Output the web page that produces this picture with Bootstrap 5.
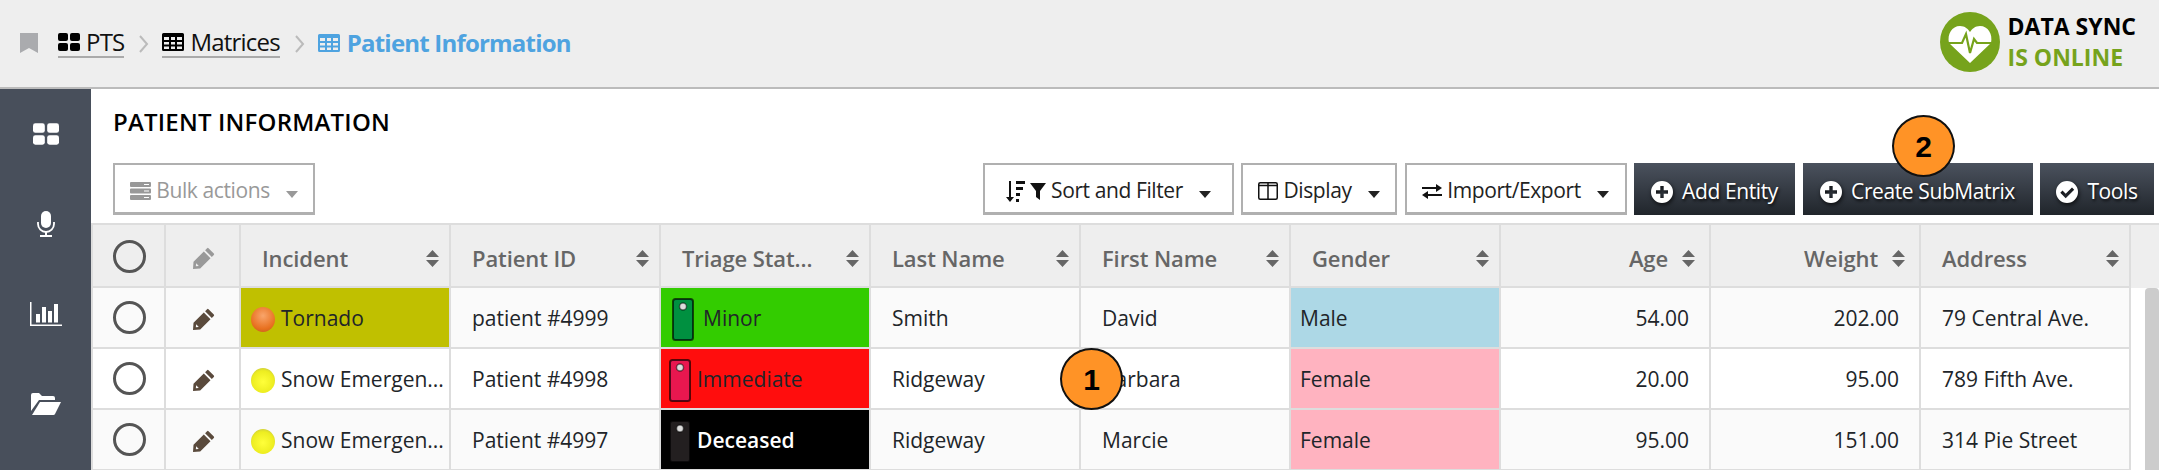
<!DOCTYPE html>
<html lang="en">
<head>
    <meta charset="UTF-8">
    <title>Patient Information</title>
    <link href="https://cdn.jsdelivr.net/npm/bootstrap@5.3.0/dist/css/bootstrap.min.css" rel="stylesheet">
    <style>
        html, body { height: 470px; overflow: hidden; }
        body { font-family: "Open Sans", "Liberation Sans", sans-serif; color: #000; background: #fff; }
        .top-bar { height: 89px; background: #eee; border-bottom: 2px solid #bbb; padding: 0 23px 0 20px; }
        .crumb { font-size: 24px; color: #111; letter-spacing: -0.8px; }
        .crumb-link { border-bottom: 2px solid #aaa; height: 42px; padding-top: 12px; gap: 6px; margin-top: 16px; }
        .crumb-sep { margin: 33px 13px 0 15px; }
        .crumb-active { color: #4ea3e0; font-weight: 700; gap: 7px; margin-top: 16px; height: 42px; padding-top: 12px; letter-spacing: -0.8px; }
        .crumb-mark { margin-top: 33px; }
        .sync-text { font-size: 23px; font-weight: 700; line-height: 31px; margin-left: 8px; }
        .sync-green { color: #76a31c; }
        .side-rail { width: 91px; height: 381px; background: #484f5b; }
        .side-item { height: 90px; }
        .main-area { width: 2068px; }
        .page-title { font-size: 24px; font-weight: 600; letter-spacing: .2px; margin: 0; padding: 19px 0 0 22px; height: 74px; line-height: 27px; }
        .tool-row { height: 60px; padding: 0 5px 0 22px; gap: 7.5px; }
        .tool-btn { height: 52px; border-radius: 0; font-size: 21px; letter-spacing: -0.4px; padding: 5px 0 0; display: flex; align-items: center; justify-content: center; gap: 5px; }
        .tool-light { background: #fff; border: 2px solid #b0b0b0; border-bottom-width: 3px; color: #222; }
        .tool-dim { color: #999; width: 202px; margin-right: auto; }
        .tool-dark { background: linear-gradient(#4b525e, #20252b); border: 0; color: #fff; text-shadow: 1px 2px 3px rgba(0,0,0,.8); gap: 9px; }
        .tool-dark svg { filter: drop-shadow(1px 2px 2px rgba(0,0,0,.7)); }
        .caret-down { width: 0; height: 0; border: 6px solid transparent; border-top: 7px solid currentColor; border-bottom: 0; margin: 7px 0 0 11px; }
        .w-sort { width: 251px; } .w-display { width: 156px; } .w-import { width: 222px; }
        .w-add { width: 161px; } .w-sub { width: 230px; } .w-tools { width: 114px; }
        .grid-wrap { height: 247px; overflow: hidden; border-top: 2px solid #ddd; }
        .grid-table { width: 2040px; table-layout: fixed; margin: 0; border-collapse: separate; border-spacing: 0; }
        .grid-table th, .grid-table td { padding: 0 9px; border: 0; border-right: 2px solid #ddd; border-bottom: 2px solid #ddd; font-size: 21px; letter-spacing: 0; vertical-align: middle; box-shadow: none; }
        .grid-table th:first-child, .grid-table td:first-child { border-left: 2px solid #ddd; }
        .grid-table thead th { height: 63px; background: #eee; color: #666; font-weight: 600; font-size: 22px; letter-spacing: -0.1px; padding: 5px 10px 0 21px; }
        .grid-table td { height: 61px; padding-top: 3px; white-space: nowrap; overflow: hidden; text-overflow: ellipsis; }
        .grid-table td.cell-pad { padding-left: 21px; }
        .grid-table td.cell-num { text-align: right; padding-right: 20px; }
        .grid-table tr.row-odd td { background: #fafafa; }
        .grid-table tr.row-even td { background: #fff; }
        .grid-table .cell-icon, .grid-table thead .cell-icon { padding: 0 0 0 2px; text-align: center; }
        .grid-table tr td.bg-yellow { background: #c0c000; }
        .grid-table tr td.bg-minor { background: #33cc00; }
        .grid-table tr td.bg-immediate { background: #ff0d0d; }
        .grid-table tr td.bg-deceased { background: #000; color: #fff; font-weight: 600; }
        .grid-table tr td.bg-male { background: #add8e6; }
        .grid-table tr td.bg-female { background: #ffb3c0; }
        .grid-table th.th-right > div { justify-content: flex-end; gap: 14px; padding-right: 4px; }
        .pick-ring { display: inline-block; width: 33px; height: 33px; border: 3px solid #555; border-radius: 50%; vertical-align: middle; }
        .status-light { flex: 0 0 24px; height: 25px; border-radius: 50%; margin: 0 6px 0 1px; }
        .light-orange { background: radial-gradient(circle at 50% 35%, #f9a56b, #e8701f 65%, #b85a1e); }
        .light-yellow { background: radial-gradient(circle at 50% 55%, #ffff3a, #eded20 60%, #a8a860); }
        .triage-wrap { gap: 6px; margin-left: -1px; }
        .triage-minor { margin-left: 2px; gap: 9px; }
        .scroll-side { width: 28px; background: #fff; }
        .scroll-head { height: 63px; background: #eee; }
        .scroll-thumb { width: 14px; height: 190px; margin-left: 14px; background: #ccc; border-radius: 4px 4px 0 0; }
        .step-badge { position: absolute; width: 63px; height: 62px; border-radius: 50%; background: #ff9326; border: 2px solid #111; font-family: "Liberation Sans", sans-serif; font-weight: 700; font-size: 30px; display: flex; align-items: center; justify-content: center; }
        .step-one { left: 1060px; top: 348px; }
        .step-two { left: 1892px; top: 115px; }
    </style>
</head>
<body class="position-relative">

    <svg width="0" height="0" class="position-absolute">
        <defs>
            <symbol id="ic-tiles" viewBox="0 0 22 18"><rect width="10" height="8" rx="2"/><rect x="12" width="10" height="8" rx="2"/><rect y="10" width="10" height="8" rx="2"/><rect x="12" y="10" width="10" height="8" rx="2"/></symbol>
            <symbol id="ic-table" viewBox="0 0 22 18"><path fill-rule="evenodd" d="M1.5 0h19A1.5 1.5 0 0 1 22 1.5v15a1.5 1.5 0 0 1-1.500 1.500h-19A1.5 1.500 0 0 1 0 16.500v-15A1.500 1.500 0 0 1 1.500 0zM2 4v3h5V4zm7 0v3h4V4zm6 0v3h5V4zM2 9v2.500h5V9zm7 0v2.500h4V9zm6 0v2.500h5V9zM2 13.500V16h5v-2.500zm7 0V16h4v-2.500zm6 0V16h5v-2.500z"/></symbol>
            <symbol id="ic-pencil" viewBox="0 0 22 22"><path d="M15.500 1.200 20.800 6.500a1 1 0 0 1 0 1.400l-2 2-6.700-6.700 2-2a1 1 0 0 1 1.400 0zM10.800 4.500l6.700 6.700L7.200 21.500 0 22l.5-7.200zM3.200 16.200l-.4 3.100 3-.4z"/></symbol>
            <symbol id="ic-sort" viewBox="0 0 13 17"><path d="M6.500 0 13 7H0zM0 10h13l-6.500 7z"/></symbol>
            <symbol id="ic-plus" viewBox="0 0 22 22"><path fill-rule="evenodd" d="M11 0a11 11 0 1 1 0 22 11 11 0 0 1 0-22zM9.300 5v4.300H5v3.400h4.300V17h3.400v-4.300H17V9.300h-4.300V5z"/></symbol>
            <symbol id="ic-check" viewBox="0 0 22 22"><path fill-rule="evenodd" d="M11 0a11 11 0 1 1 0 22 11 11 0 0 1 0-22zM16 6.500l-6.300 6.300-3.200-3.200-2.200 2.200 5.400 5.400 8.500-8.500z"/></symbol>
            <symbol id="ic-phone" viewBox="0 0 22 43"><rect x="1" y="1" width="20" height="41" rx="2.500" fill="currentColor" stroke="#000" stroke-opacity=".65" stroke-width="2"/><circle cx="11" cy="8.500" r="3.500" fill="#ddd" stroke="#000" stroke-opacity=".5" stroke-width="1.500"/></symbol>
        </defs>
    </svg>

    <header class="top-bar d-flex justify-content-between">
        <div class="crumb d-flex align-items-start">
            <svg width="18" height="20" viewBox="0 0 18 20" fill="#aaabae" class="crumb-mark me-3"><path d="M0 0h18v20l-9-5-9 5z"/></svg>
            <div class="crumb-link d-flex align-items-center ms-1">
                <svg width="22" height="18"><use href="#ic-tiles"/></svg>PTS
            </div>
            <svg class="crumb-sep" width="10" height="22" viewBox="0 0 10 22"><path d="M1 3l7 8-7 8" fill="none" stroke="#bbb" stroke-width="2"/></svg>
            <div class="crumb-link d-flex align-items-center">
                <svg width="22" height="18"><use href="#ic-table"/></svg>Matrices
            </div>
            <svg class="crumb-sep" width="10" height="22" viewBox="0 0 10 22"><path d="M1 3l7 8-7 8" fill="none" stroke="#bbb" stroke-width="2"/></svg>
            <div class="crumb-active d-flex align-items-center">
                <svg width="22" height="18" fill="#4ea3e0"><use href="#ic-table"/></svg>Patient Information
            </div>
        </div>
        <div class="d-flex align-items-center">
            <svg width="60" height="60" viewBox="0 0 60 60" class="mb-1">
                <circle cx="30" cy="30" r="30" fill="#76a31c"/>
                <path d="M30 51 9 31C7 22 12 14 20 14c5 0 8 3 10 6 2-3 5-6 10-6 8 0 13 8 11 17z" fill="#fff"/>
                <path d="M8 31h14l4-9 4 19 4-14 3 4h15" fill="none" stroke="#76a31c" stroke-width="2.200"/>
            </svg>
            <div class="sync-text mb-1">DATA SYNC<br><span class="sync-green">IS ONLINE</span></div>
        </div>
    </header>

    <div class="d-flex">
        <nav class="side-rail d-flex flex-column align-items-center flex-shrink-0 text-white">
            <div class="side-item d-flex align-items-center justify-content-center">
                <svg width="26" height="22" fill="#fff"><use href="#ic-tiles"/></svg>
            </div>
            <div class="side-item d-flex align-items-center justify-content-center">
                <svg width="18" height="26" viewBox="0 0 18 26" fill="#fff"><rect x="4" y="0" width="10" height="17" rx="5"/><path d="M1 11v2a8 8 0 0 0 16 0v-2" fill="none" stroke="#fff" stroke-width="1.800"/><path d="M8 20h2v4h5v2H3v-2h5z"/></svg>
            </div>
            <div class="side-item d-flex align-items-center justify-content-center">
                <svg width="32" height="24" viewBox="0 0 32 24" fill="#fff"><path d="M0 0h1.500v22.500H32V24H0z"/><rect x="6" y="12" width="4" height="8.500"/><rect x="12" y="5" width="4" height="15.500"/><rect x="18" y="9" width="4" height="11.500"/><rect x="24" y="2" width="4" height="18.500"/></svg>
            </div>
            <div class="side-item d-flex align-items-center justify-content-center">
                <svg width="30" height="22" viewBox="0 0 30 22" fill="#fff"><path d="M0 2a2 2 0 0 1 2-2h6l3 3h11a2 2 0 0 1 2 2v2H8L0 18z"/><path d="M9 9h21l-6 12a2 2 0 0 1-1.500 1H1z"/></svg>
            </div>
        </nav>

        <main class="main-area">
            <h1 class="page-title">PATIENT INFORMATION</h1>
            <div class="tool-row d-flex">
                <button class="btn tool-btn tool-light tool-dim">
                    <svg width="21" height="18" viewBox="0 0 21 18" fill="#999"><path fill-rule="evenodd" d="M1 0h19a1 1 0 0 1 1 1v3a1 1 0 0 1-1 1H1a1 1 0 0 1-1-1V1a1 1 0 0 1 1-1zm13 2v1h5V2zM1 6.500h19a1 1 0 0 1 1 1v3a1 1 0 0 1-1 1H1a1 1 0 0 1-1-1v-3a1 1 0 0 1 1-1zm13 2v1h5v-1zM1 13h19a1 1 0 0 1 1 1v3a1 1 0 0 1-1 1H1a1 1 0 0 1-1-1v-3a1 1 0 0 1 1-1zm13 2v1h5v-1z"/></svg>
                    Bulk actions<span class="caret-down"></span>
                </button>
                <button class="btn tool-btn tool-light w-sort">
                    <svg width="41" height="21" viewBox="0 0 41 21" fill="#111"><path d="M4 0h2v16h3l-4 5-4-5h3zM11 0h9v3h-9zM11 6h7v3h-7zM11 12h4v3h-4zM11 18h3v3h-3zM25 2h16l-6 8v9l-4-3v-6z"/></svg>
                    Sort and Filter<span class="caret-down"></span>
                </button>
                <button class="btn tool-btn tool-light w-display">
                    <svg width="20" height="18" viewBox="0 0 20 18" fill="none" stroke="#111" stroke-width="1.500"><rect x=".75" y=".75" width="18.500" height="16.500" rx="1.500"/><path d="M10 1v16M1 3.500h18"/></svg>
                    Display<span class="caret-down"></span>
                </button>
                <button class="btn tool-btn tool-light w-import">
                    <svg width="20" height="15" viewBox="0 0 20 15" fill="#111"><path d="M0 3h14V0l6 4-6 4V5H0zM20 10H6V7l-6 4 6 4v-3h14z"/></svg>
                    Import/Export<span class="caret-down"></span>
                </button>
                <button class="btn tool-btn tool-dark w-add"><svg width="22" height="26" fill="#fff"><use href="#ic-plus"/></svg>Add Entity</button>
                <button class="btn tool-btn tool-dark w-sub"><svg width="22" height="26" fill="#fff"><use href="#ic-plus"/></svg>Create SubMatrix</button>
                <button class="btn tool-btn tool-dark w-tools"><svg width="22" height="26" fill="#fff"><use href="#ic-check"/></svg>Tools</button>
            </div>

            <div class="grid-wrap d-flex">
                <table class="table grid-table flex-shrink-0">
                    <colgroup>
                        <col style="width:75px"><col style="width:75px">
                        <col style="width:210px"><col style="width:210px"><col style="width:210px"><col style="width:210px"><col style="width:210px"><col style="width:210px"><col style="width:210px"><col style="width:210px"><col style="width:210px">
                    </colgroup>
                    <thead>
                        <tr>
                            <th class="cell-icon"><span class="pick-ring"></span></th>
                            <th class="cell-icon"><svg width="22" height="22" fill="#999"><use href="#ic-pencil"/></svg></th>
                            <th><div class="d-flex justify-content-between align-items-center">Incident<svg width="13" height="17" fill="#666"><use href="#ic-sort"/></svg></div></th>
                            <th><div class="d-flex justify-content-between align-items-center">Patient ID<svg width="13" height="17" fill="#666"><use href="#ic-sort"/></svg></div></th>
                            <th><div class="d-flex justify-content-between align-items-center">Triage Stat...<svg width="13" height="17" fill="#666"><use href="#ic-sort"/></svg></div></th>
                            <th><div class="d-flex justify-content-between align-items-center">Last Name<svg width="13" height="17" fill="#666"><use href="#ic-sort"/></svg></div></th>
                            <th><div class="d-flex justify-content-between align-items-center">First Name<svg width="13" height="17" fill="#666"><use href="#ic-sort"/></svg></div></th>
                            <th><div class="d-flex justify-content-between align-items-center">Gender<svg width="13" height="17" fill="#666"><use href="#ic-sort"/></svg></div></th>
                            <th class="th-right"><div class="d-flex align-items-center">Age<svg width="13" height="17" fill="#666"><use href="#ic-sort"/></svg></div></th>
                            <th class="th-right"><div class="d-flex align-items-center">Weight<svg width="13" height="17" fill="#666"><use href="#ic-sort"/></svg></div></th>
                            <th><div class="d-flex justify-content-between align-items-center">Address<svg width="13" height="17" fill="#666"><use href="#ic-sort"/></svg></div></th>
                        </tr>
                    </thead>
                    <tbody>
                        <tr class="row-odd">
                            <td class="cell-icon"><span class="pick-ring"></span></td>
                            <td class="cell-icon"><svg width="22" height="22" fill="#5a4a3c"><use href="#ic-pencil"/></svg></td>
                            <td class="bg-yellow"><div class="d-flex align-items-center"><span class="status-light light-orange"></span>Tornado</div></td>
                            <td class="cell-pad">patient #4999</td>
                            <td class="bg-minor"><div class="d-flex align-items-center triage-minor"><svg width="22" height="43" color="#009040"><use href="#ic-phone"/></svg>Minor</div></td>
                            <td class="cell-pad">Smith</td>
                            <td class="cell-pad">David</td>
                            <td class="bg-male">Male</td>
                            <td class="cell-num">54.00</td>
                            <td class="cell-num">202.00</td>
                            <td class="cell-pad">79 Central Ave.</td>
                        </tr>
                        <tr class="row-even">
                            <td class="cell-icon"><span class="pick-ring"></span></td>
                            <td class="cell-icon"><svg width="22" height="22" fill="#5a4a3c"><use href="#ic-pencil"/></svg></td>
                            <td><div class="d-flex align-items-center"><span class="status-light light-yellow"></span>Snow Emergen...</div></td>
                            <td class="cell-pad">Patient #4998</td>
                            <td class="bg-immediate"><div class="d-flex align-items-center triage-wrap"><svg width="22" height="43" color="#e8174f"><use href="#ic-phone"/></svg>Immediate</div></td>
                            <td class="cell-pad">Ridgeway</td>
                            <td class="cell-pad">Barbara</td>
                            <td class="bg-female">Female</td>
                            <td class="cell-num">20.00</td>
                            <td class="cell-num">95.00</td>
                            <td class="cell-pad">789 Fifth Ave.</td>
                        </tr>
                        <tr class="row-odd">
                            <td class="cell-icon"><span class="pick-ring"></span></td>
                            <td class="cell-icon"><svg width="22" height="22" fill="#5a4a3c"><use href="#ic-pencil"/></svg></td>
                            <td><div class="d-flex align-items-center"><span class="status-light light-yellow"></span>Snow Emergen...</div></td>
                            <td class="cell-pad">Patient #4997</td>
                            <td class="bg-deceased"><div class="d-flex align-items-center triage-wrap"><svg width="22" height="43" color="#231f20"><use href="#ic-phone"/></svg>Deceased</div></td>
                            <td class="cell-pad">Ridgeway</td>
                            <td class="cell-pad">Marcie</td>
                            <td class="bg-female">Female</td>
                            <td class="cell-num">95.00</td>
                            <td class="cell-num">151.00</td>
                            <td class="cell-pad">314 Pie Street</td>
                        </tr>
                    </tbody>
                </table>
                <div class="scroll-side flex-shrink-0">
                    <div class="scroll-head"></div>
                    <div class="scroll-thumb"></div>
                </div>
            </div>
        </main>
    </div>

    <div class="step-badge step-one">1</div>
    <div class="step-badge step-two">2</div>

</body>
</html>
